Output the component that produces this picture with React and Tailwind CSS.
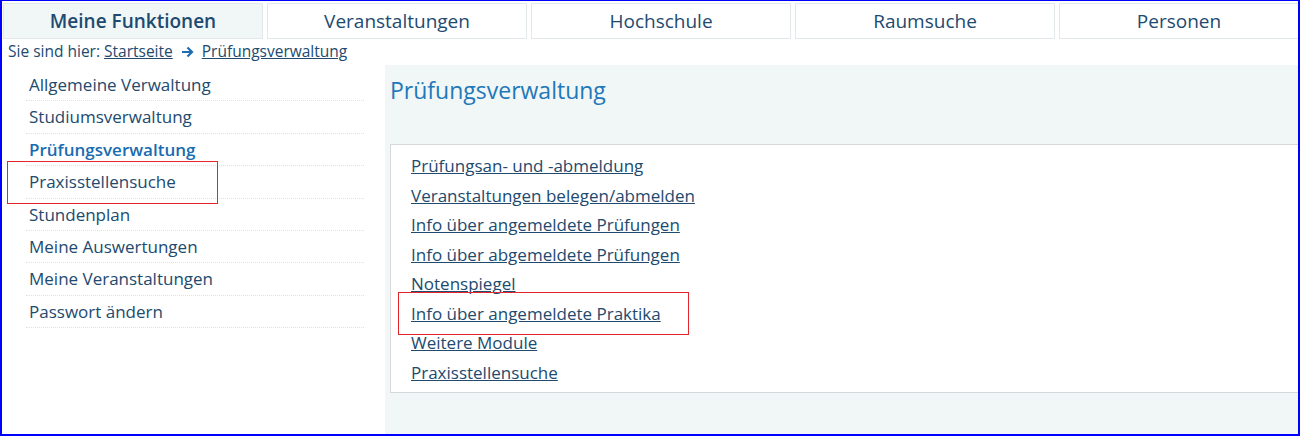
import React from 'react';

const tabs = ['Meine Funktionen', 'Veranstaltungen', 'Hochschule', 'Raumsuche', 'Personen'];

const sideItems = [
  'Allgemeine Verwaltung',
  'Studiumsverwaltung',
  'Prüfungsverwaltung',
  'Praxisstellensuche',
  'Stundenplan',
  'Meine Auswertungen',
  'Meine Veranstaltungen',
  'Passwort ändern',
];

const links = [
  'Prüfungsan- und -abmeldung',
  'Veranstaltungen belegen/abmelden',
  'Info über angemeldete Prüfungen',
  'Info über abgemeldete Prüfungen',
  'Notenspiegel',
  'Info über angemeldete Praktika',
  'Weitere Module',
  'Praxisstellensuche',
];

// red annotation frame laid over content
function Mark({ className }) {
  return <div className={`absolute pointer-events-none border border-[#e5262c] ${className}`} />;
}

export default function App() {
  return (
    <div
      className="w-[1300px] h-[436px] bg-white border-x-2 border-t border-b-2 border-[#0000ff] overflow-hidden flex flex-col text-[#214a6e]"
      style={{ fontFamily: '"Open Sans", "Noto Sans", sans-serif' }}
    >
      {/* --- Top tabs --- */}
      <div className="flex gap-1 pl-px pt-[2px]">
        {tabs.map((t, i) => (
          <div
            key={t}
            className={`h-[36px] flex items-center justify-center border border-[#e3e8ea] text-[19px] text-[#1d4a70] ${
              i === 0 ? 'bg-[#f1f6f7] font-semibold' : 'bg-white'
            } ${i === tabs.length - 1 ? 'flex-1 border-r-0' : 'w-[260px]'}`}
          >
            {t}
          </div>
        ))}
      </div>

      {/* --- Breadcrumb --- */}
      <div className="h-[26px] flex items-center pl-[6px] text-[15.5px]">
        <span>Sie sind hier:&nbsp;</span>
        <span className="underline">Startseite</span>
        <svg className="mx-[8px]" width="13" height="12" viewBox="0 0 13 12">
          <path d="M1 6h10M6.5 1.5 11 6l-4.5 4.5" fill="none" stroke="#1f6db0" strokeWidth="2.2" />
        </svg>
        <span className="underline">Prüfungsverwaltung</span>
      </div>

      {/* --- Body --- */}
      <div className="relative flex flex-1">
        <div className="w-[383px] pt-[4px] pl-[24px] pr-[21px]">
          {sideItems.map((s, i) => (
            <div
              key={s}
              className={`h-[32.4px] flex items-center pl-[3px] border-b border-dotted border-[#dde2e4] text-[17px] ${
                i === 2 ? 'font-semibold text-[#1a6cb0]' : ''
              }`}
            >
              {s}
            </div>
          ))}
        </div>

        <div className="flex-1 bg-[#f1f6f7] pl-[5px] pt-[10px]">
          <h1 className="text-[23px] leading-[30px] text-[#1f78b8] h-[69px]">Prüfungsverwaltung</h1>
          <div className="bg-white border-l border-y border-[#d5d9db] pl-[20px] pt-[6px] pb-[5px]">
            {links.map((l) => (
              <div key={l} className="h-[29.5px] flex items-center text-[17px] underline">
                {l}
              </div>
            ))}
          </div>
        </div>

        <Mark className="left-[5px] top-[96px] w-[211px] h-[43px]" />
        <Mark className="left-[396px] top-[227px] w-[291px] h-[43px]" />
      </div>
    </div>
  );
}
